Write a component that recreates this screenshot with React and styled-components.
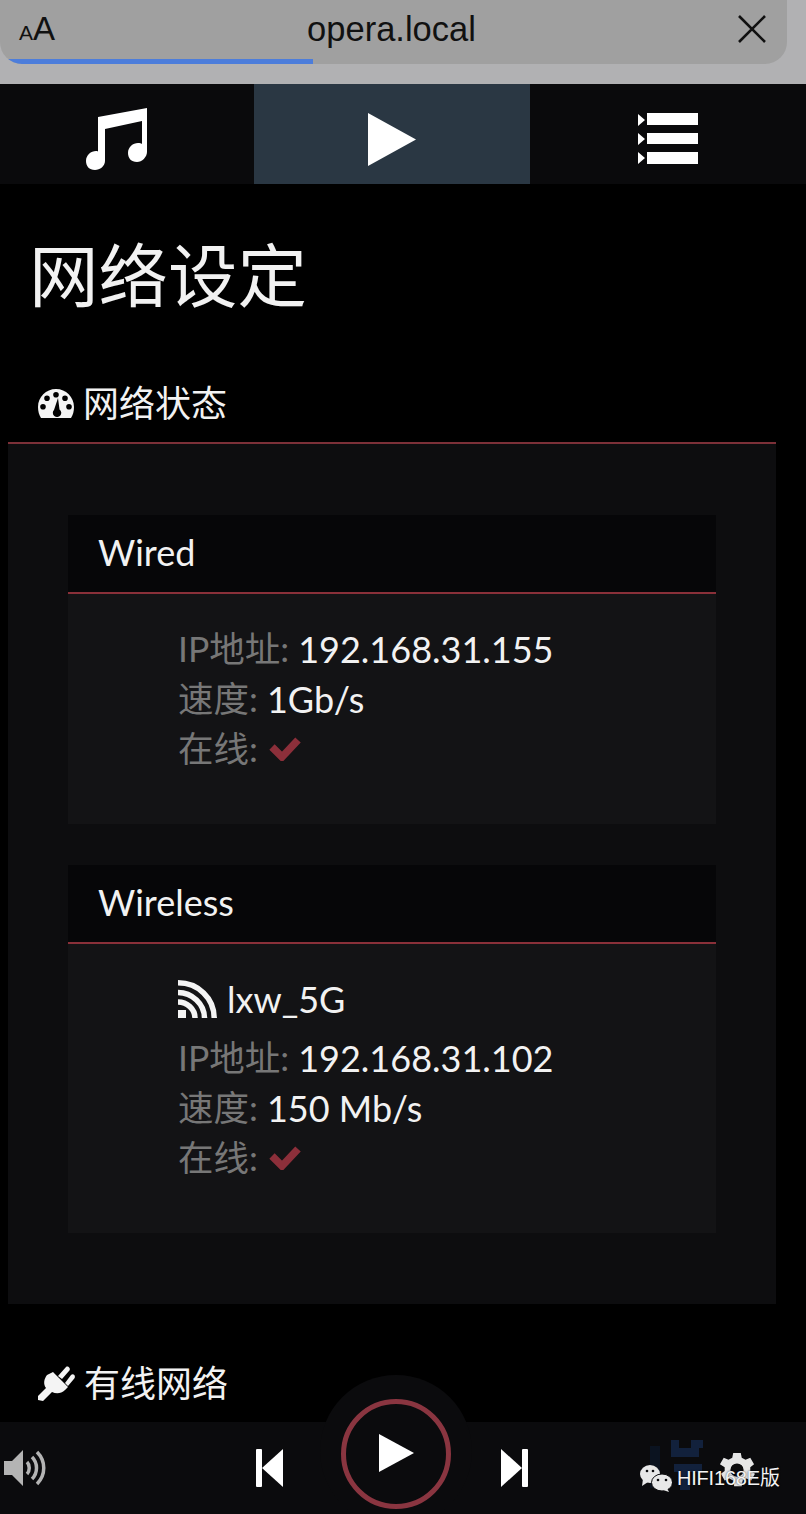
import styled, { createGlobalStyle } from 'styled-components';

const GlobalStyle = createGlobalStyle`
  html, body {
    margin : 0;
    padding : 0;
    background : #000;
  }
  * {
    box-sizing : border-box;
  }
`

const Page = styled.div`
  position : relative;
  width : 806px;
  height : 1514px;
  overflow : hidden;
  display : flex;
  flex-direction : column;
  background : #000;
  color : #f2f2f2;
  font-family : Lato, "Noto Sans CJK SC", sans-serif;
`

const BrowserBar = styled.div`
  height : 84px;
  flex : none;
  background : #b1b1b3;
`

const AddressPill = styled.div`
  position : relative;
  width : 787px;
  height : 64px;
  padding : 0 19px 6px 19px;
  display : grid;
  grid-template-columns : 270px 1fr 270px;
  align-items : center;
  overflow : hidden;
  border-radius : 0 0 22px 22px;
  background : #a0a0a0;
  color : #111;
  font-family : "Liberation Sans", sans-serif;
`

const FontSize = styled.span`
  font-size : 33px;
  small {
    font-size : 21px;
  }
`

const Host = styled.span`
  font-size : 34.500px;
  text-align : center;
  transform : translateX(-2px);
`

const Progress = styled.div`
  position : absolute;
  left : 0;
  bottom : 0;
  height : 5px;
  background : #4c7ddb;
`

const CloseIcon = styled.svg`
  justify-self : end;
  width : 30px;
  height : 30px;
  margin-right : 1px;
  stroke : #111;
  stroke-width : 2.6;
`

const Tabs = styled.nav`
  height : 100px;
  flex : none;
  display : grid;
  grid-template-columns : 254px 276px 276px;
  background : #0a0a0c;
`

const Tab = styled.div`
  display : flex;
  align-items : center;
  justify-content : center;
  padding : 10px ${(props) => props.$right || 0}px 0 0;
  color : #fff;
  background : ${(props) => (props.$active ? '#2a3743' : 'transparent')};
`

const PageTitle = styled.h1`
  margin : 48px 0 0 29px;
  font-size : 69.500px;
  line-height : 86px;
  font-weight : 400;
  height : 86px;
`

const SectionHead = styled.h2`
  display : flex;
  align-items : center;
  gap : 9px;
  margin : ${(props) => props.$top}px 0 0 38px;
  height : 40px;
  font-size : 36px;
  line-height : 40px;
  font-weight : 400;
  white-space : nowrap;
`

const SectionRule = styled.div`
  margin : 19px 30px 0 8px;
  height : 2px;
  background : #7c3038;
`

const Panel = styled.section`
  margin : 0 30px 0 8px;
  padding : 71px 60px 71px 60px;
  display : flex;
  flex-direction : column;
  gap : 41px;
  background : #0d0d0f;
`

const Card = styled.article`
  background : #131315;
`

const CardHead = styled.div`
  height : 79px;
  padding : 0 31px 3px 30px;
  display : flex;
  align-items : center;
  font-size : 36px;
  background : #060608;
  border-bottom : 2px solid #8a3039;
`

const CardBody = styled.div`
  padding : ${(props) => props.$top}px 0 50px 110px;
  font-size : 36px;
  line-height : 50px;
`

const Row = styled.div`
  display : flex;
  align-items : center;
  height : 50px;
  white-space : pre;
`

const SsidRow = styled(Row)`
  gap : 10px;
  margin-bottom : 9px;
`

const Label = styled.span`
  color : #777;
  font-size : 35.500px;
`

const Value = styled.span`
  color : #f2f2f2;
`

const TickMark = styled.svg`
  margin-left : 11px;
  width : 32px;
  height : 24px;
  fill : none;
  stroke : #8c2f3a;
  stroke-width : 7.500;
`

const PlayerBar = styled.footer`
  position : absolute;
  left : 0;
  right : 0;
  bottom : 0;
  height : 92px;
  background : #0b0b0d;
`

const Bump = styled.div`
  position : absolute;
  left : 396px;
  top : -47px;
  width : 152px;
  height : 152px;
  margin-left : -76px;
  border-radius : 50%;
  background : #0b0b0d;
`

const PlayerRing = styled.div`
  position : absolute;
  left : 341px;
  top : -23px;
  width : 110px;
  height : 110px;
  padding-bottom : 3px;
  display : flex;
  align-items : center;
  justify-content : center;
  border : 5px solid #8a3540;
  border-radius : 50%;
`

const BarIcon = styled.div`
  position : absolute;
  left : ${(props) => props.$x}px;
  top : ${(props) => props.$y}px;
  display : flex;
`

const Watermark = styled.div`
  position : absolute;
  left : 640px;
  top : 1464px;
  display : flex;
  align-items : center;
  gap : 5px;
  color : #f4f4f4;
  font-family : "Liberation Sans", "Noto Sans CJK SC", sans-serif;
  font-size : 20px;
  line-height : 28px;
  letter-spacing : -.2px;
  text-shadow : 0 0 2px rgba(0, 0, 0, .8);
`

const Triangle = ({ w, h }) => (
  <svg width={w} height={h} viewBox={`0 0 ${w} ${h}`} fill="#fff">
    <path d={`M0 0L${w} ${h / 2}L0 ${h}z`} />
  </svg>
);

const MusicIcon = () => (
  <svg width="62" height="62" viewBox="0 0 62 62" fill="#fff">
    <path d="M12 9L61 0v44c0 5-5 10-10 10-6 0-9-4-9-9 0-6 5-10 10-10 2 0 3 .3 4 1V13L19 21v32c0 5-5 9-10 9-6 0-9-4-9-9 0-6 5-10 10-10 1 0 2 .2 2 .5z" transform="translate(1 0)" />
  </svg>
);

const QueueIcon = () => (
  <svg width="60" height="52" viewBox="0 0 60 52" fill="#fff">
    <path d="M0 1l7 6-7 6zM0 20l7 6-7 6zM0 39l7 6-7 6z" />
    <rect x="9" y="0" width="51" height="12" />
    <rect x="9" y="20" width="51" height="11" />
    <rect x="9" y="39" width="51" height="12" />
  </svg>
);

const GaugeIcon = () => (
  <svg width="36" height="29" viewBox="0 0 36 29" fill="#f4f4f4">
    <path fillRule="evenodd" d="M18 0C8 0 0 8 0 18c0 4 1 8 3 11h30c2-3 3-7 3-11C36 8 28 0 18 0zM18 3a2.800 2.800 0 1 1 0 5.600a2.800 2.800 0 0 1 0-5.600zM9 6.500a2.800 2.800 0 1 1 0 5.600a2.800 2.800 0 0 1 0-5.600zM27 6.500a2.800 2.800 0 1 1 0 5.600a2.800 2.800 0 0 1 0-5.600zM5 15a2.800 2.800 0 1 1 0 5.600a2.800 2.800 0 0 1 0-5.600zM31 15a2.800 2.800 0 1 1 0 5.600a2.800 2.800 0 0 1 0-5.600zM20 9l1.500 11.500a4.200 4.200 0 1 1-5.500 .5z" />
  </svg>
);

const PlugIcon = () => (
  <svg width="37" height="36" viewBox="0 0 37 36" fill="#f4f4f4">
    <path d="M15 7l15 15-3 3c-4 4-9 4-13 2l-9 9-5-1v-4l8-8c-3-4-2-9 1-13z" />
    <path d="M20 11l8-9c1.500-1 3 0 3.500 1 .5 1 .5 2-.5 3l-7 8zM27 18l6-8c1-1 2.500-1 3.300 0 .8 1 .8 2.500 0 3.500l-6.300 7.500z" />
  </svg>
);

const WifiIcon = () => (
  <svg width="39" height="38" viewBox="0 0 39 38" fill="none" stroke="#f4f4f4" strokeWidth="5.500">
    <path d="M0 2.800C20 2.800 36.200 18 36.200 38" />
    <path d="M0 12.500C14 12.500 26.500 24 26.500 38" />
    <path d="M0 22C9 22 17 29 17 38" />
    <rect x="0" y="30" width="8" height="8" fill="#f4f4f4" stroke="none" />
  </svg>
);

const Tick = () => (
  <TickMark viewBox="0 0 32 24">
    <path d="M3 10l10 10L29 3" />
  </TickMark>
);

const VolumeIcon = () => (
  <svg width="42" height="38" viewBox="0 0 42 38" fill="none" stroke="#b4b4b4" strokeWidth="3.500">
    <path d="M0 12h8L19 1v36L8 26H0z" fill="#b4b4b4" stroke="none" />
    <path d="M23 13c3 3 3 9 0 12" />
    <path d="M28 8c6 6 6 16 0 22" />
    <path d="M33 3c9 9 9 23 0 32" />
  </svg>
);

const SkipIcon = ({ flip }) => (
  <svg width="28" height="38" viewBox="0 0 28 38" fill="#fff" style={flip ? { transform: 'scaleX(-1)' } : undefined}>
    <rect x="0" y="0" width="6" height="38" rx="1" />
    <path d="M6 19L27 0v38z" />
  </svg>
);

const LogoGhost = () => (
  <svg width="56" height="50" viewBox="0 0 56 50" fill="#12213c">
    <rect x="0" y="6" width="10" height="42" fill="#0b1320" />
    <path d="M21 0h8v8h12V0h12v8h-4v9H21z" />
    <path d="M24 24h28v8H40v18h-10V32h-6z" />
  </svg>
);

const GearIcon = () => (
  <svg width="36" height="36" viewBox="0 0 38 38" fill="#e6e6e6">
    <path fillRule="evenodd" d="M15 0h8l1 5 4 2 5-2 4 7-4 3v4l5 3-4 7-5-2-4 2-1 6h-8l-1-6-4-2-5 2-4-7 4-3v-4L1 12l4-7 5 2 4-2zM19 11a7 7 0 1 0 0 14a7 7 0 0 0 0-14z" />
  </svg>
);

const WechatIcon = () => (
  <svg width="32" height="27" viewBox="0 0 32 27" fill="#e8e8e8">
    <ellipse cx="10" cy="9" rx="10" ry="9" />
    <path d="M3 14l-1 7 6-4z" />
    <ellipse cx="22" cy="17.500" rx="10.500" ry="8.500" stroke="#0b0b0d" strokeWidth="1" />
    <path d="M27 23l2 4-6-2z" />
    <circle cx="7" cy="6" r="1.300" fill="#0b0b0d" />
    <circle cx="13" cy="6" r="1.300" fill="#0b0b0d" />
    <circle cx="18" cy="15" r="1.300" fill="#0b0b0d" />
    <circle cx="26" cy="15" r="1.300" fill="#0b0b0d" />
  </svg>
);

function InfoRows({ ip, speed }) {
  return (
    <>
      <Row><Label>IP地址: </Label><Value>{ip}</Value></Row>
      <Row><Label>速度: </Label><Value>{speed}</Value></Row>
      <Row><Label>在线:</Label><Tick /></Row>
    </>
  );
}

export default function App() {
  return (
    <Page>
      <GlobalStyle />
      <BrowserBar>
        <AddressPill>
          <FontSize><small>A</small>A</FontSize>
          <Host>opera.local</Host>
          <CloseIcon viewBox="0 0 30 30">
            <path d="M2 2l26 26M28 2L2 28" />
          </CloseIcon>
          <Progress style={{ width: 313 }} />
        </AddressPill>
      </BrowserBar>
      <Tabs>
        <Tab $right={22}><MusicIcon /></Tab>
        <Tab $active><Triangle w={48} h={53} /></Tab>
        <Tab><QueueIcon /></Tab>
      </Tabs>

      <PageTitle>网络设定</PageTitle>

      <SectionHead $top={65}>
        <GaugeIcon />网络状态
      </SectionHead>
      <SectionRule />
      <Panel>
        <Card>
          <CardHead>Wired</CardHead>
          <CardBody $top={30}>
            <InfoRows ip="192.168.31.155" speed="1Gb/s" />
          </CardBody>
        </Card>
        <Card>
          <CardHead>Wireless</CardHead>
          <CardBody $top={30}>
            <SsidRow><WifiIcon /><Value>lxw_5G</Value></SsidRow>
            <InfoRows ip="192.168.31.102" speed="150 Mb/s" />
          </CardBody>
        </Card>
      </Panel>

      <SectionHead $top={59}>
        <PlugIcon />有线网络
      </SectionHead>

      <PlayerBar>
        <Bump />
        <PlayerRing><Triangle w={35} h={38} /></PlayerRing>
        <BarIcon $x={4} $y={27}><VolumeIcon /></BarIcon>
        <BarIcon $x={256} $y={27}><SkipIcon /></BarIcon>
        <BarIcon $x={500} $y={27}><SkipIcon flip /></BarIcon>
        <BarIcon $x={650} $y={18}><LogoGhost /></BarIcon>
        <BarIcon $x={719} $y={31}><GearIcon /></BarIcon>
      </PlayerBar>

      <Watermark>
        <WechatIcon />HIFI168E版
      </Watermark>
    </Page>
  );
}
